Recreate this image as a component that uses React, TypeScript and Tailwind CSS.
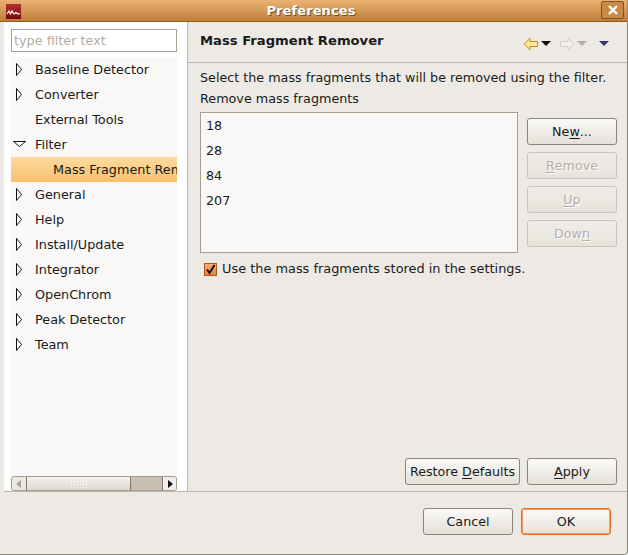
const FONT = "font-['DejaVu_Sans',sans-serif]";

const TREE = [
  { label: "Baseline Detector", kind: "closed" },
  { label: "Converter", kind: "closed" },
  { label: "External Tools", kind: "leaf" },
  { label: "Filter", kind: "open" },
  { label: "Mass Fragment Remover", kind: "selected" },
  { label: "General", kind: "closed" },
  { label: "Help", kind: "closed" },
  { label: "Install/Update", kind: "closed" },
  { label: "Integrator", kind: "closed" },
  { label: "OpenChrom", kind: "closed" },
  { label: "Peak Detector", kind: "closed" },
  { label: "Team", kind: "closed" },
];

const FRAGMENTS = ["18", "28", "84", "207"];

function Twisty({ open }: { open: boolean }) {
  return (
    <svg width="13" height="13" viewBox="0 0 13 13" className="shrink-0">
      {open ? (
        <path d="M0.5 3.5 H12.5 L6.5 8.5 Z" fill="#fff" stroke="#111" strokeWidth="1" />
      ) : (
        <path d="M3.5 0.5 V12.5 L8.5 6.5 Z" fill="#fff" stroke="#111" strokeWidth="1" />
      )}
    </svg>
  );
}

function TreeRow({ label, kind }: { label: string; kind: string }) {
  const selected = kind === "selected";
  return (
    <div
      className={`flex h-[25px] items-center overflow-hidden whitespace-nowrap ${
        selected ? "bg-gradient-to-b from-[#fedb9e] to-[#f8c070] pl-[42px]" : "pl-[2px]"
      }`}
    >
      {!selected && (
        <div className="flex w-[22px] shrink-0 pr-[9px]">
          {kind !== "leaf" && <Twisty open={kind === "open"} />}
        </div>
      )}
      <span className="text-[12.8px] text-[#1a1a1a]">{label}</span>
    </div>
  );
}

function GtkButton({
  pre,
  mn,
  post,
  disabled,
  focused,
  className,
}: {
  pre: string;
  mn?: string;
  post?: string;
  disabled?: boolean;
  focused?: boolean;
  className?: string;
}) {
  const look = disabled
    ? "border-[#c9c3ba] from-[#f0ede8] to-[#e7e3dc] text-[#b5aea3] [text-shadow:1px_1px_0_#fff]"
    : focused
      ? "border-[#e9701f] from-[#fbfaf8] to-[#e6e2db] text-[#1a1a1a] shadow-[inset_0_0_0_1px_#f59a5c]"
      : "border-[#8b8478] from-[#fbfaf8] to-[#e4e0d9] text-[#1a1a1a]";
  return (
    <div
      className={`flex h-[27px] items-center justify-center rounded-[3px] border bg-gradient-to-b text-[12.7px] whitespace-pre ${look} ${className ?? ""}`}
    >
      {pre}
      {mn && <span className="underline underline-offset-2">{mn}</span>}
      {post}
    </div>
  );
}

function ScrollBar() {
  return (
    <div className="flex h-[15px] items-stretch overflow-hidden rounded-[3px] border border-[#a59c8e] bg-[#c9beb3]">
      <div className="flex w-[14px] items-center justify-center bg-[#ebe8e2]">
        <svg width="6" height="8" viewBox="0 0 6 8">
          <path d="M5 0 V8 L0 4 Z" fill="#a8a59f" />
        </svg>
      </div>
      <div className="flex w-[105px] items-center justify-center border-x border-[#84796b] bg-gradient-to-b from-[#f5f3f0] to-[#dcd8d1]">
        <div className="h-[8px] w-[17px] bg-[radial-gradient(#fff_40%,transparent_45%)] bg-[length:3px_3px]" />
      </div>
      <div className="flex-1" />
      <div className="flex w-[14px] items-center justify-center border-l border-[#84796b] bg-[#f1efeb]">
        <svg width="6" height="8" viewBox="0 0 6 8">
          <path d="M1 0 V8 L6 4 Z" fill="#111" />
        </svg>
      </div>
    </div>
  );
}

function NavIcons() {
  return (
    <div className="mt-[3px] flex items-center">
      <svg width="16" height="14" viewBox="0 0 16 14">
        <path
          d="M7 1.5 L1 7 L7 12.5 V9.5 H14.5 V4.5 H7 Z"
          fill="#fde79a"
          stroke="#c88a12"
          strokeWidth="1"
        />
      </svg>
      <svg width="10" height="5" viewBox="0 0 10 5" className="ml-[2px]">
        <path d="M0 0 H10 L5 5 Z" fill="#111" />
      </svg>
      <svg width="16" height="14" viewBox="0 0 16 14" className="ml-[8px]">
        <path
          d="M9 1.5 L15 7 L9 12.5 V9.5 H1.5 V4.5 H9 Z"
          fill="#f0eee9"
          stroke="#d3d0ca"
          strokeWidth="1"
        />
      </svg>
      <svg width="10" height="5" viewBox="0 0 10 5" className="ml-[2px]">
        <path d="M0 0 H10 L5 5 Z" fill="#b3ab9f" />
      </svg>
      <svg width="10" height="5" viewBox="0 0 10 5" className="ml-[12px]">
        <path d="M0 0 H10 L5 5 Z" fill="#38346e" />
      </svg>
    </div>
  );
}

export default function App() {
  return (
    <div
      className={`flex h-[555px] w-[628px] flex-col overflow-hidden rounded-br-[4px] border-r border-b border-[#8f887d] bg-[#edeae5] ${FONT}`}
    >
      {/* title bar */}
      <div className="relative flex h-[22px] shrink-0 items-center justify-center border-b border-[#8c5c25] bg-gradient-to-b from-[#eab274] to-[#c07f39]">
        <svg width="15" height="15" viewBox="0 0 15 15" className="absolute top-[4px] left-[6px]">
          <defs>
            <linearGradient id="logo" x1="0" y1="0" x2="0" y2="1">
              <stop offset="0" stopColor="#b5302f" />
              <stop offset="1" stopColor="#760a0c" />
            </linearGradient>
          </defs>
          <rect width="15" height="15" fill="url(#logo)" />
          <path d="M1 10 L3 7 L4.5 10 L6 7 L8 10 L10 8.5 L12 10 L14 9.5" fill="none" stroke="#fff" strokeWidth="1.2" />
        </svg>
        <span className="mr-[5px] text-[13px] font-bold tracking-[0.1px] text-white [text-shadow:1px_1px_0_#7a5020]">
          Preferences
        </span>
        <div className="absolute top-[1px] right-[3px] flex h-[18px] w-[23px] items-center justify-center rounded-[2px] border border-[#7d5227] bg-[#c98a48]">
          <svg width="10" height="10" viewBox="0 0 10 10">
            <path d="M1 1 L9 9 M9 1 L1 9" stroke="#fff" strokeWidth="2.4" />
          </svg>
        </div>
      </div>

      <div className="flex min-h-0 flex-1">
        {/* left: filter + tree */}
        <div className="ml-[4px] flex w-[184px] shrink-0 flex-col border-r border-[#bdb9b2] bg-white pt-[7px] pr-[10px] pl-[7px]">
          <div className="flex h-[23px] shrink-0 items-center border border-[#a89e90] bg-white pl-[2px] text-[12.8px] text-[#b5ab9f]">
            type filter text
          </div>
          <div className="mt-[5px] flex min-h-0 flex-1 flex-col bg-[#f9f8f6]">
            <div className="min-h-0 flex-1">
              {TREE.map((t) => (
                <TreeRow key={t.label} label={t.label} kind={t.kind} />
              ))}
            </div>
            <ScrollBar />
          </div>
        </div>

        {/* right: page */}
        <div className="flex min-w-0 flex-1 flex-col">
          <div className="flex h-[41px] shrink-0 items-center justify-between border-b border-[#bdb9b2] pr-[18px] pl-[12px]">
            <span className="mb-[2px] text-[13.15px] font-bold text-[#1a1a1a]">Mass Fragment Remover</span>
            <NavIcons />
          </div>
          <div className="flex min-h-0 flex-1 flex-col pr-[10px] pl-[12px] text-[12.72px] text-[#1a1a1a]">
            <div className="mt-[6px] leading-[18px] whitespace-nowrap">
              Select the mass fragments that will be removed using the filter.
            </div>
            <div className="mt-[3px] text-[12.75px] leading-[18px]">Remove mass fragments</div>
            <div className="mt-[4px] flex gap-[9px]">
              <div className="h-[141px] w-[318px] border border-[#a89e90] bg-[#f9f8f6] pl-[5px]">
                {FRAGMENTS.map((f) => (
                  <div key={f} className="flex h-[25px] items-center">
                    {f}
                  </div>
                ))}
              </div>
              <div className="flex w-[90px] flex-col gap-[7px] pt-[6px]">
                <GtkButton pre="Ne" mn="w" post="..." />
                <GtkButton pre="" mn="R" post="emove" disabled />
                <GtkButton pre="" mn="U" post="p" disabled />
                <GtkButton pre="Dow" mn="n" disabled />
              </div>
            </div>
            <label className="mt-[8px] ml-[4px] flex items-center gap-[5px] text-[12.9px] leading-[16px]">
              <div className="flex h-[13px] w-[13px] items-center justify-center border border-[#a55a22] bg-gradient-to-b from-[#f8b07a] to-[#e8803a]">
                <svg width="11" height="11" viewBox="0 0 11 11">
                  <path d="M2 5.5 L4.5 9 L9.5 1" fill="none" stroke="#111" strokeWidth="2" />
                </svg>
              </div>
              Use the mass fragments stored in the settings.
            </label>
            <div className="mt-auto mb-[6px] flex justify-end gap-[7px]">
              <GtkButton pre="Restore " mn="D" post="efaults" className="w-[115px]" />
              <GtkButton pre="" mn="A" post="pply" className="w-[90px]" />
            </div>
          </div>
        </div>
      </div>

      {/* dialog buttons */}
      <div className="ml-[4px] flex h-[63px] shrink-0 justify-end gap-[8px] border-t border-[#bdb9b2] pt-[16px] pr-[16px]">
        <GtkButton pre="Cancel" className="w-[90px]" />
        <GtkButton pre="OK" focused className="w-[90px]" />
      </div>
    </div>
  );
}
